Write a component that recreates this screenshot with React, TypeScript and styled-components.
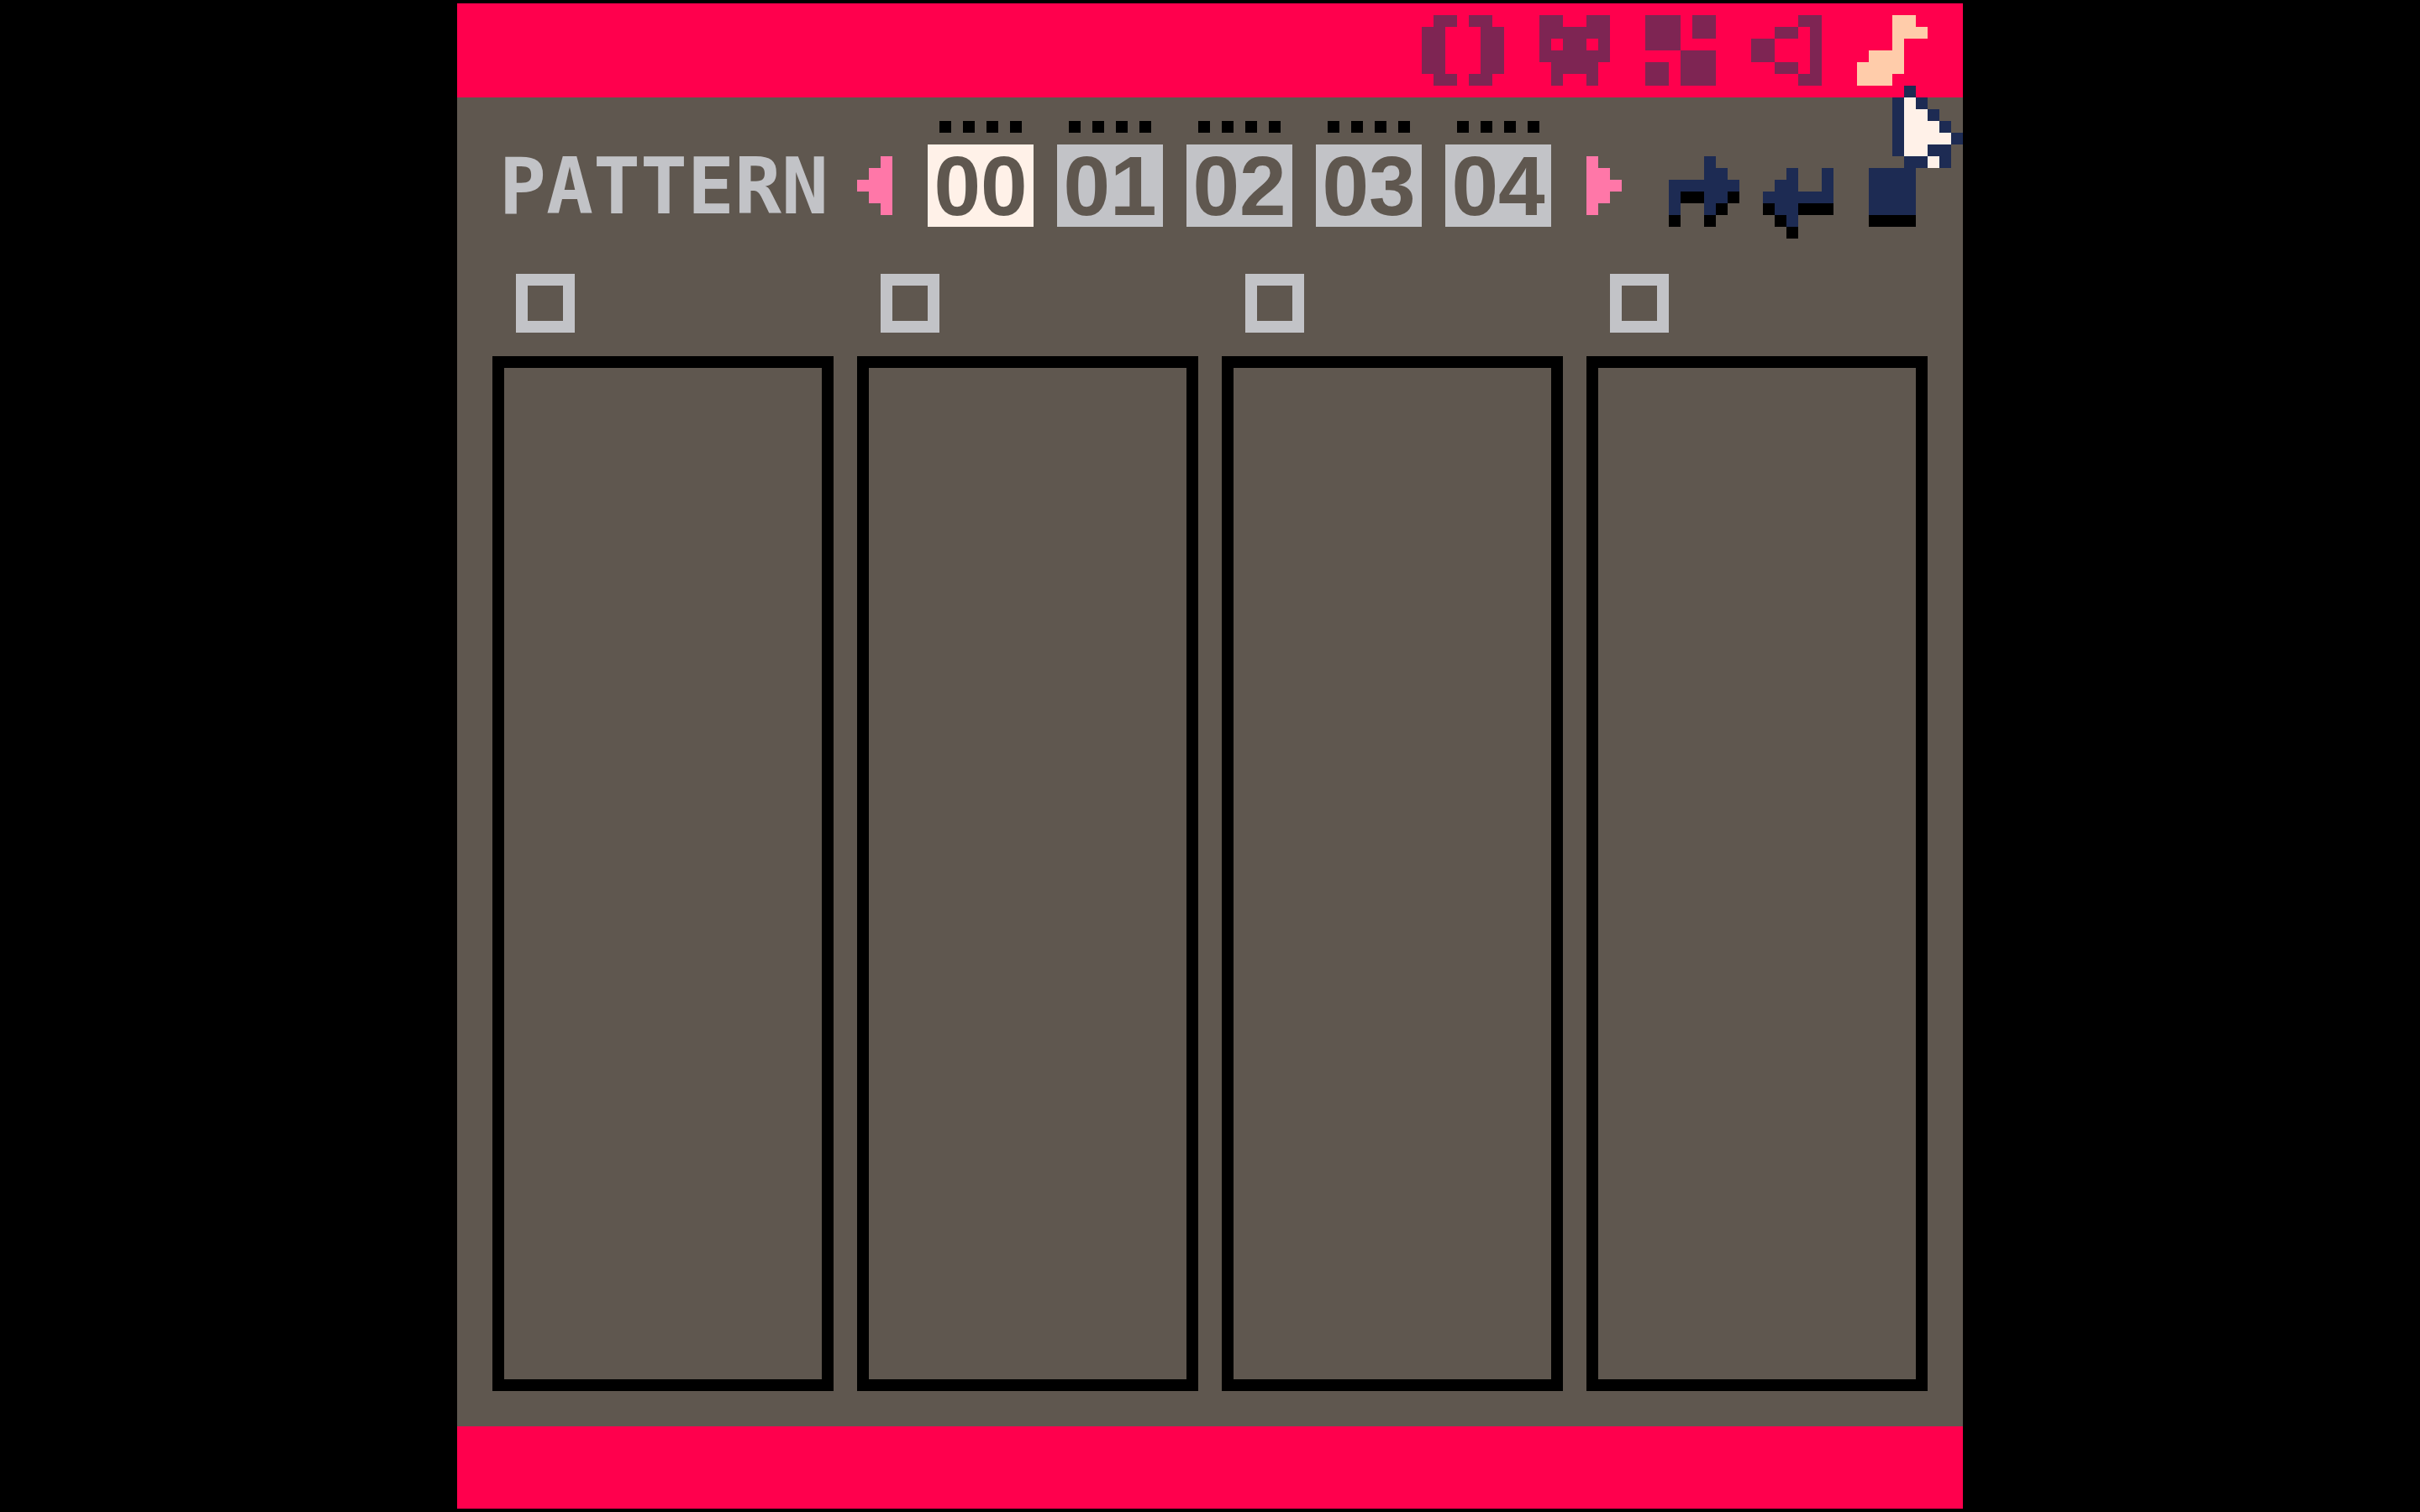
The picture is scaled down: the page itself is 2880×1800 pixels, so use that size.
import React, { useState } from "react";
import styled, { createGlobalStyle } from "styled-components";

const palette = {
  black: "#000000",
  navy: "#1d2b53",
  plum: "#7e2553",
  grey: "#5f574f",
  silver: "#c2c3c7",
  white: "#fff1e8",
  red: "#ff004d",
  pink: "#ff77a8",
  peach: "#ffccaa",
};

const PX = 14;

const GlobalStyle = createGlobalStyle`
  *, *::before, *::after { box-sizing: border-box; }
  body {
    margin: 0;
    background: ${palette.black};
    font-family: "Liberation Sans", Arial, sans-serif;
  }
`;

const Page = styled.div`
  min-height: 100vh;
  padding: 4px 0;
  display: flex;
  justify-content: center;
`;

const Screen = styled.div`
  position: relative;
  width: 100%;
  max-width: 1792px;
  display: flex;
  flex-direction: column;
  background: ${palette.grey};
`;

const TopBar = styled.nav`
  display: flex;
  justify-content: flex-end;
  gap: 42px;
  padding: 14px 42px;
  background: ${palette.red};
`;

const StatusBar = styled.footer`
  height: 98px;
  background: ${palette.red};
`;

const Editor = styled.main`
  flex: 1;
  display: flex;
  flex-direction: column;
  gap: 42px;
  padding: 28px 0 42px;
`;

const IconButton = styled.button<{ $color: string }>`
  display: block;
  padding: 0;
  border: 0;
  background: none;
  color: ${(p) => p.$color};
  cursor: pointer;
`;

const Sprite = styled.svg`
  display: block;
`;

const Toolbar = styled.div`
  display: flex;
  align-items: flex-start;
  padding: 0 56px 0 50px;
`;

const Title = styled.h1`
  flex: 1;
  margin: 42px 0 0;
  font-family: "DejaVu Sans Mono", monospace;
  font-size: 93px;
  font-weight: 700;
  line-height: 72px;
  color: ${palette.silver};
`;

const Pager = styled.div`
  display: flex;
  align-items: flex-start;
  gap: 42px;
  margin-right: 56px;

  > button {
    margin-top: 42px;
  }
`;

const Bank = styled.div`
  display: flex;
  gap: 28px;
`;

const Slot = styled.div`
  display: flex;
  flex-direction: column;
  align-items: center;
  gap: 14px;
`;

const Channels = styled.div`
  display: flex;
  gap: 14px;
`;

const Dot = styled.span`
  width: 14px;
  height: 14px;
  background: ${palette.black};
`;

const PatternButton = styled.button<{ $active: boolean }>`
  width: 126px;
  height: 98px;
  padding: 0;
  border: 0;
  background: ${(p) => (p.$active ? palette.white : palette.silver)};
  color: ${palette.grey};
  font-family: "Liberation Sans", Arial, sans-serif;
  font-size: 100px;
  font-weight: 700;
  line-height: 98px;
  text-align: center;
  cursor: pointer;
`;

const Flags = styled.div`
  display: flex;
  gap: 28px;
  margin-top: 42px;

  > :last-child {
    margin-left: 14px;
  }
`;

const Tracks = styled.div`
  flex: 1;
  display: grid;
  grid-template-columns: repeat(4, 1fr);
  gap: 28px;
  padding: 0 42px;
`;

const Track = styled.section`
  display: flex;
  flex-direction: column;
  gap: 28px;
`;

const TrackToggle = styled.input`
  appearance: none;
  width: 70px;
  height: 70px;
  margin: 0 0 0 28px;
  border: 14px solid ${palette.silver};
  cursor: pointer;

  &:checked {
    background: ${palette.pink};
  }
`;

const TrackBody = styled.div`
  flex: 1;
  border: 14px solid ${palette.black};
`;

const Pointer = styled.div`
  position: absolute;
  top: 98px;
  right: 0;
  pointer-events: none;
`;

const inks: Record<string, string> = {
  x: "currentColor",
  n: palette.navy,
  k: palette.black,
  w: palette.white,
};

function Pixels({ rows }: { rows: string[] }) {
  const w = rows[0].length;
  const h = rows.length;
  const cells: React.ReactNode[] = [];
  rows.forEach((row, y) => {
    let x = 0;
    while (x < w) {
      let end = x + 1;
      while (end < w && row[end] === row[x]) end++;
      if (row[x] !== ".") {
        cells.push(<rect key={`${x}-${y}`} x={x} y={y} width={end - x} height={1} fill={inks[row[x]]} />);
      }
      x = end;
    }
  });
  return (
    <Sprite width={w * PX} height={h * PX} viewBox={`0 0 ${w} ${h}`} shapeRendering="crispEdges" aria-hidden="true">
      {cells}
    </Sprite>
  );
}

const editors = [
  { name: "Code", rows: [".xx.xx.", "xx...xx", "xx...xx", "xx...xx", "xx...xx", ".xx.xx."] },
  { name: "Sprites", rows: ["xx..xx", "xxxxxx", "x.xx.x", "xxxxxx", ".xxxx.", ".x..x."] },
  { name: "Map", rows: ["xxx.xx", "xxx.xx", "xxx...", "...xxx", "xx.xxx", "xx.xxx"] },
  { name: "Sound effects", rows: ["....xx", "..xx.x", "xx...x", "xx...x", "..xx.x", "....xx"] },
  { name: "Music", rows: ["...xx.", "...xxx", "...x..", ".xxx..", "xxxx..", "xxx..."] },
];

const previousArrow = ["..x", ".xx", "xxx", ".xx", "..x"];
const nextArrow = ["x..", "xx.", "xxx", "xx.", "x.."];

const flags = [
  { name: "Loop start", rows: ["...n..", "...nn.", "nnnnnn", "nkknnk", "n..nk.", "k..k..", "......"] },
  { name: "Loop back", rows: ["......", "..n..n", ".nn..n", "nnnnnn", "knnkkk", ".kn...", "..k..."] },
  { name: "Stop", rows: ["....", "nnnn", "nnnn", "nnnn", "nnnn", "kkkk", "...."] },
];

const pointer = [".n....", "nwn...", "nwwn..", "nwwwn.", "nwwwwn", "nwwnn.", ".nnwn."];

const patterns = ["00", "01", "02", "03", "04"];
const channels = [0, 1, 2, 3];

export default function App() {
  const [pattern, setPattern] = useState(0);
  const [editor, setEditor] = useState("Music");

  return (
    <>
      <GlobalStyle />
      <Page>
        <Screen>
          <TopBar aria-label="Editors">
            {editors.map((e) => (
              <IconButton
                key={e.name}
                type="button"
                aria-label={e.name}
                $color={e.name === editor ? palette.peach : palette.plum}
                onClick={() => setEditor(e.name)}
              >
                <Pixels rows={e.rows} />
              </IconButton>
            ))}
          </TopBar>

          <Editor>
            <Toolbar>
              <Title>PATTERN</Title>
              <Pager>
                <IconButton
                  type="button"
                  aria-label="Previous pattern"
                  $color={palette.pink}
                  onClick={() => setPattern(Math.max(0, pattern - 1))}
                >
                  <Pixels rows={previousArrow} />
                </IconButton>
                <Bank>
                  {patterns.map((label, i) => (
                    <Slot key={label}>
                      <Channels>
                        {channels.map((c) => (
                          <Dot key={c} />
                        ))}
                      </Channels>
                      <PatternButton type="button" $active={i === pattern} onClick={() => setPattern(i)}>
                        {label}
                      </PatternButton>
                    </Slot>
                  ))}
                </Bank>
                <IconButton
                  type="button"
                  aria-label="Next pattern"
                  $color={palette.pink}
                  onClick={() => setPattern(Math.min(patterns.length - 1, pattern + 1))}
                >
                  <Pixels rows={nextArrow} />
                </IconButton>
              </Pager>
              <Flags>
                {flags.map((f) => (
                  <IconButton key={f.name} type="button" aria-label={f.name} $color={palette.navy}>
                    <Pixels rows={f.rows} />
                  </IconButton>
                ))}
              </Flags>
            </Toolbar>

            <Tracks>
              {channels.map((c) => (
                <Track key={c}>
                  <TrackToggle type="checkbox" aria-label={`Channel ${c}`} />
                  <TrackBody />
                </Track>
              ))}
            </Tracks>
          </Editor>

          <StatusBar />
          <Pointer>
            <Pixels rows={pointer} />
          </Pointer>
        </Screen>
      </Page>
    </>
  );
}
